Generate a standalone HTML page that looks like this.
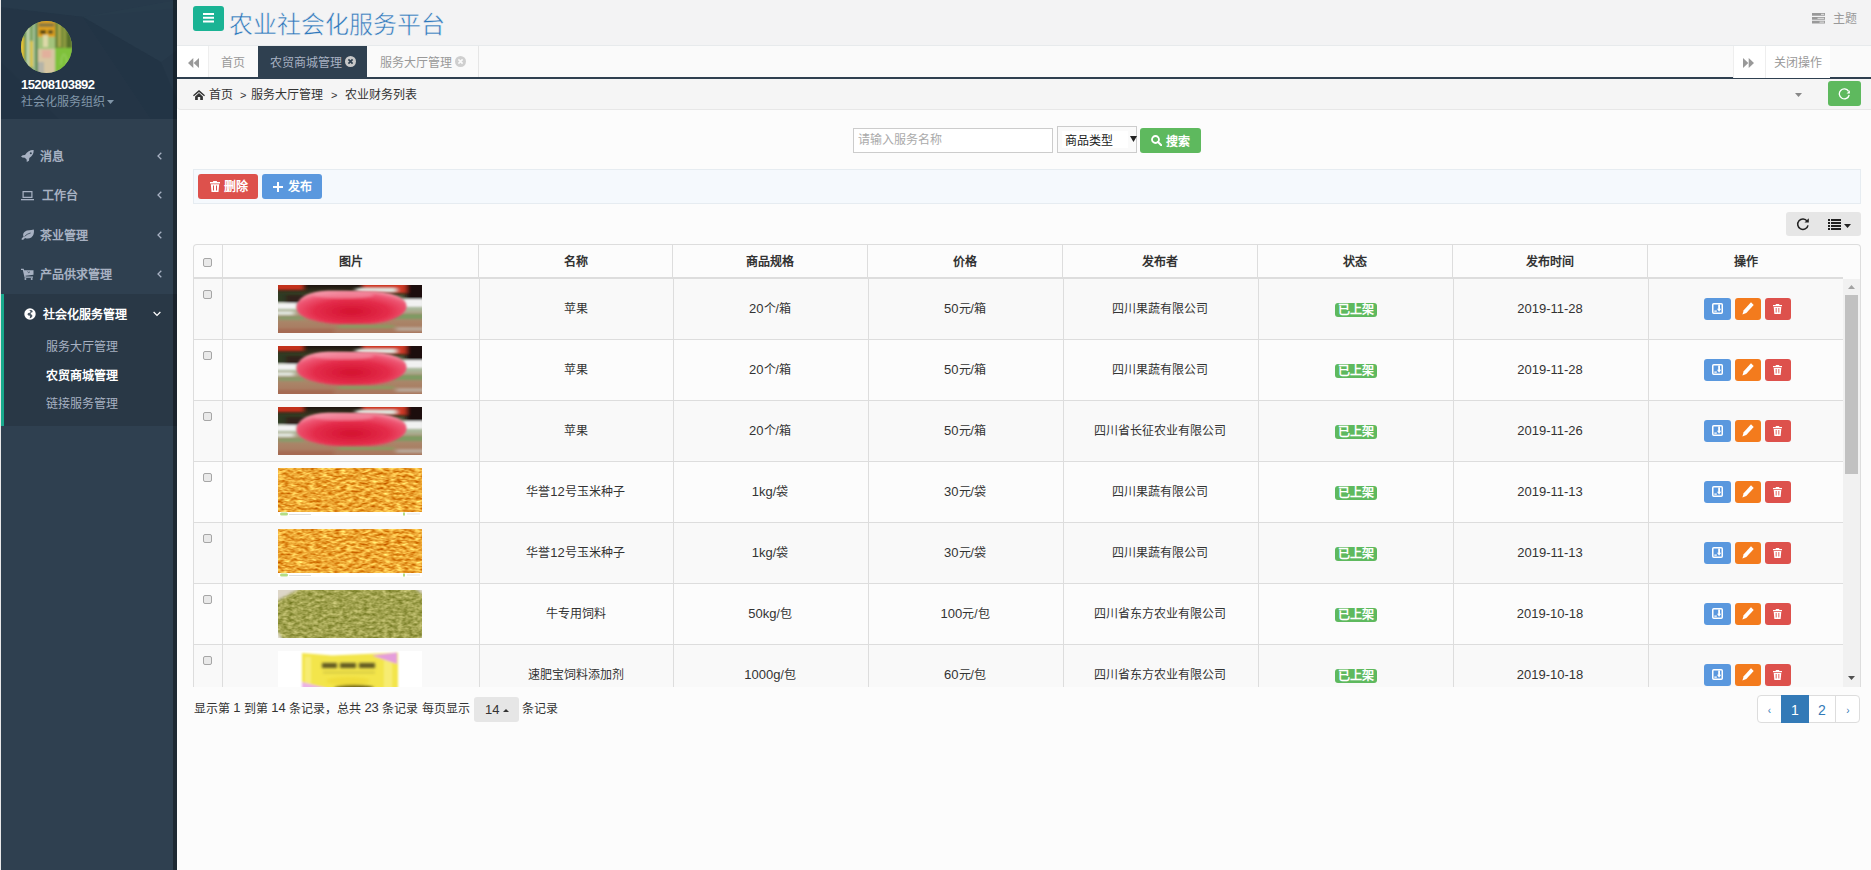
<!DOCTYPE html>
<html lang="zh-CN">
<head>
<meta charset="utf-8">
<title>农业社会化服务平台</title>
<style>
*{box-sizing:border-box;margin:0;padding:0}
html,body{width:1871px;height:870px;overflow:hidden;background:#fcfcfc}
body{font-family:"Liberation Sans",sans-serif;font-size:12px;color:#333;position:relative;line-height:1}
.abs{position:absolute}
svg{display:block}
i.n{font-style:normal;font-size:13px;position:relative;top:-1px}

/* ---------- sidebar ---------- */
#edge{left:0;top:0;width:1px;height:870px;background:#e9e9e9}
#side{left:1px;top:0;width:176px;height:870px;background:#2f4050;overflow:hidden}
#strip{left:173px;top:0;width:4px;height:870px;background:rgba(0,0,0,.36)}
#shead{left:0;top:0;width:176px;height:119px;background:#253748;overflow:hidden}
#avatar{left:20px;top:21px;width:51px;height:52px;border-radius:50%;overflow:hidden}
#uname{left:20px;top:78px;font-size:13px;font-weight:bold;color:#fff;letter-spacing:-.55px;line-height:14px;white-space:nowrap}
#urole{left:20px;top:95px;font-size:12px;color:#8095a8;line-height:14px;white-space:nowrap}
.mi{left:0;width:172px;height:39px;color:#a7b1c2;font-weight:bold;font-size:12px;white-space:nowrap}
.mi .ic{position:absolute;left:20px;top:14px}
.mi .tx{position:absolute;top:14px;line-height:14px}
.mi .ar{position:absolute;left:156px;top:16px}
#act{left:0;top:294px;width:176px;height:132px;background:#293846;border-left:3px solid #19aa8d}
.sub{left:44.5px;font-size:12px;line-height:14px;color:#a7b1c2;white-space:nowrap}

/* ---------- top ---------- */
#top{left:177px;top:0;width:1694px;height:46px;background:#f3f3f4;border-bottom:1px solid #e7eaec}
#burger{left:16px;top:6px;width:31px;height:25px;background:#1ab394;border-radius:3px}
#title{left:52px;top:10.500px;font-size:24px;line-height:28px;color:#2f78bc;font-weight:300;-webkit-text-stroke:.5px #f3f3f4;white-space:nowrap}
#theme{left:1656px;top:12px;font-size:12px;line-height:14px;color:#999;white-space:nowrap}

#tabs{left:177px;top:46px;width:1694px;height:33px;background:#fafafa;border-bottom:2px solid #2f4050}
.tab{top:0;height:31px;font-size:12px;line-height:14px;color:#999;white-space:nowrap}
.tab .t{position:absolute;top:10px}

#crumb{left:177px;top:79px;width:1694px;height:31px;background:#f5f5f5;border-bottom:1px solid #e7e7e7;border-radius:0 0 0 4px}
#crumb .c{position:absolute;top:9px;line-height:14px;white-space:nowrap;color:#333}
#rbtn{left:1651px;top:2px;width:33px;height:25px;background:#5eb95e;border-radius:3px}

/* ---------- search ---------- */
#sinput{left:853px;top:128px;width:200px;height:25px;background:#fff;border:1px solid #ccc;color:#aaa;line-height:23px;padding-left:4px;white-space:nowrap}
#ssel{left:1057px;top:126px;width:80px;height:27px;background:#fafafa;border:1px solid #ccc}
#ssel .in{position:absolute;left:4px;top:4px;width:66px;height:17px;background:#fff;line-height:20px;padding-left:3px;color:#222;white-space:nowrap}
#sbtn{left:1140px;top:128px;width:61px;height:25px;background:#5eb95e;border-radius:3px;color:#fff;font-weight:bold}

/* ---------- toolbar ---------- */
#tbar{left:193px;top:169px;width:1668px;height:35px;background:#f5f9fd;border:1px solid #e6ecf1}
.btn{border-radius:3px;color:#fff;font-weight:bold;white-space:nowrap}
#tools{left:1786px;top:212px;width:75px;height:24px;background:#e6e6e6;border-radius:3px}

/* ---------- table ---------- */
#tbl{left:193px;top:244px;width:1668px;height:443px;border:1px solid #ddd;border-bottom:0;border-radius:4px 4px 0 0;overflow:hidden}
#thead{left:0;top:0;width:1666px;height:32px;font-weight:bold}
#thead .h{position:absolute;top:0;height:32px;line-height:35px;text-align:center;border-left:1px solid #ddd;white-space:nowrap}
#hline{left:0;top:32px;width:1649px;height:2px;background:#ddd}
#tbody{left:0;top:34px;width:1649px;height:408px;overflow:hidden}
.row{left:0;width:1649px;height:61px;border-bottom:1px solid #ddd}
.row.s{background:#f9f9f9}
.row .d{position:absolute;top:0;height:60px;border-left:1px solid #ddd;display:flex;align-items:center;justify-content:center;white-space:nowrap;padding-right:2px}
.cb{position:absolute;width:9px;height:9px;border:1px solid #a6a6a6;border-radius:2px;background:#e9e9e9}
.pic{width:144px;height:48px;overflow:hidden;position:relative;left:0}
.badge{display:block;margin-left:2px;width:42px;height:14px;background:#5eb95e;border-radius:3px;color:#fff;font-weight:bold;font-size:12px;line-height:14px;text-align:center;margin-top:2px}
.ab{display:block;height:22px;border-radius:3px;position:relative;margin-right:4px;left:2px}
#sbar{left:1649px;top:34px;width:17px;height:409px;background:#f1f1f1}

/* ---------- footer ---------- */
#info{left:194px;top:701px;line-height:16px;white-space:nowrap}
#psize{left:474px;top:697px;width:45px;height:25px;background:#e6e6e6;border-radius:3px}
#pager{left:1757px;top:695px;width:103px;height:28px;border:1px solid #ddd;border-radius:4px;background:#fff;color:#337ab7;font-size:14px}
#pager div{position:absolute;top:-1px;height:28px;line-height:30px;text-align:center}
</style>
</head>
<body>
<div id="edge" class="abs"></div>
<div id="side" class="abs">
  <div id="shead" class="abs">
    <svg class="abs" style="left:0;top:0" width="176" height="119" viewBox="0 0 176 119">
      <polygon points="0,0 176,0 176,8 82,17 0,7" fill="#2a3d4e" opacity=".5"/>
      <polygon points="82,17 176,0 176,50 160,62" fill="#2a3e4f" opacity=".55"/>
      <polygon points="82,17 160,62 176,100 176,119 150,119" fill="#213343" opacity=".55"/>
      <polygon points="0,8 82,17 150,119 0,119" fill="#223444" opacity=".35"/>
      <polygon points="0,62 58,119 0,119" fill="#203141" opacity=".4"/>
    </svg>
    <div id="avatar" class="abs">
      <svg width="51" height="52" viewBox="0 0 51 52">
        <defs><filter id="avb" x="-10%" y="-10%" width="120%" height="120%"><feGaussianBlur stdDeviation="1"/></filter></defs>
        <rect width="51" height="52" fill="#8aa860"/>
        <g filter="url(#avb)">
          <rect x="-2" y="-2" width="19" height="56" fill="#7fa463"/>
          <rect x="-1" y="16" width="4" height="30" fill="#e6c436"/>
          <rect x="3" y="4" width="2" height="44" fill="#5f8f4a"/>
          <rect x="5.500" y="6" width="3" height="42" fill="#c4d6b0"/>
          <rect x="9" y="20" width="3" height="26" fill="#dcc446"/>
          <rect x="12" y="0" width="2.500" height="54" fill="#a8c49a"/>
          <rect x="14" y="0" width="3.500" height="54" fill="#638f58"/>
          <rect x="17" y="-2" width="17" height="19" fill="#e0a21e"/>
          <rect x="18" y="2" width="15" height="4" fill="#8a7a40"/>
          <rect x="19" y="9" width="6" height="4" fill="#5a4a18"/>
          <rect x="27" y="9" width="5" height="4" fill="#6a5a20"/>
          <rect x="17" y="16" width="17" height="13" fill="#a4c47c"/>
          <rect x="22" y="14" width="5" height="12" fill="#dcd9a8"/>
          <rect x="17" y="28" width="17" height="26" fill="#d7c6a2"/>
          <rect x="21" y="29" width="9" height="8" fill="#e2b09c"/>
          <rect x="17" y="41" width="6" height="14" fill="#b4b4a8"/>
          <rect x="34" y="-2" width="19" height="30" fill="#6d8438"/>
          <rect x="37" y="2" width="3" height="24" fill="#a9a84a"/>
          <rect x="42" y="6" width="3" height="22" fill="#8c9a3e"/>
          <rect x="46" y="8" width="4" height="20" fill="#566f2c"/>
          <rect x="34" y="27" width="19" height="27" fill="#7fc13a"/>
          <path d="M40 44c0-7 2-11 3-11s3 4 3 11" fill="none" stroke="#a9d87a" stroke-width=".8"/>
        </g>
      </svg>
    </div>
    <div id="uname" class="abs">15208103892</div>
    <div id="urole" class="abs">社会化服务组织<svg style="display:inline-block;margin-left:2px;vertical-align:2px" width="7" height="4" viewBox="0 0 7 4"><path d="M0 0h7L3.5 4z" fill="#8095a8"/></svg></div>
  </div>
  
  <div class="mi abs" style="top:136px"><svg class="ic" width="13" height="12" viewBox="0 0 13 12"><path fill="#a7b1c2" d="M12.6.1c.3 3-1 5.600-4.300 8l-.3 2.600L5.800 12l-.200-2.400-1.800-1.800L1.400 7.600 0 6.400l1.700-1.200 2.300-.1C6.400 1.600 9.300-.1 12.600.1zM9.800 2.300a1 1 0 1 0 .01 2 1 1 0 0 0-.01-2z"/></svg><span class="tx" style="left:39px">消息</span><svg class="ar" width="5" height="8" viewBox="0 0 5 8"><path d="M4.3.7L1 4l3.3 3.3" fill="none" stroke="#a7b1c2" stroke-width="1.3"/></svg></div>
  <div class="mi abs" style="top:175px"><svg class="ic" width="13" height="12" viewBox="0 0 13 12"><path fill="none" stroke="#a7b1c2" stroke-width="1.200" d="M2.100 2.600h8.800v5.800H2.100z"/><rect x="0" y="10" width="13" height="1.300" fill="#a7b1c2"/></svg><span class="tx" style="left:41px">工作台</span><svg class="ar" width="5" height="8" viewBox="0 0 5 8"><path d="M4.3.7L1 4l3.3 3.3" fill="none" stroke="#a7b1c2" stroke-width="1.3"/></svg></div>
  <div class="mi abs" style="top:215px"><svg class="ic" width="13" height="12" viewBox="0 0 13 12"><path fill="#a7b1c2" d="M12.800.6c.6 3.400-.3 6.300-2.500 7.800-1.900 1.300-4.300 1.400-6.200.5-.8.600-1.500 1.300-2.100 2.200L.3 10.200c.7-1 1.400-1.700 2.300-2.400C1.700 6 2.100 3.700 4.100 2.400 6.300.9 9.500 1.400 12.800.6z"/><path d="M3.600 7.500C5.200 5.700 7.200 4.600 9.600 4" fill="none" stroke="#2f4050" stroke-width=".8"/></svg><span class="tx" style="left:39px">茶业管理</span><svg class="ar" width="5" height="8" viewBox="0 0 5 8"><path d="M4.3.7L1 4l3.3 3.3" fill="none" stroke="#a7b1c2" stroke-width="1.3"/></svg></div>
  <div class="mi abs" style="top:254px"><svg class="ic" width="13" height="12" viewBox="0 0 13 12"><path fill="#a7b1c2" d="M0 .8h2.700l.4 1.400h9.400v4.600L4.500 7.700l.2.800h7.300v1.200H3.600L1.800 2H0zM4.400 10a1 1 0 1 1 0 2 1 1 0 0 1 0-2zm6.300 0a1 1 0 1 1 0 2 1 1 0 0 1 0-2z"/><path d="M6.700 3.400l.8 1.300 1.500-.9" fill="none" stroke="#2f4050" stroke-width=".7"/></svg><span class="tx" style="left:39px">产品供求管理</span><svg class="ar" width="5" height="8" viewBox="0 0 5 8"><path d="M4.3.7L1 4l3.3 3.3" fill="none" stroke="#a7b1c2" stroke-width="1.3"/></svg></div>
  <div id="act" class="abs">
    <svg class="abs" style="left:20px;top:14px" width="12" height="12" viewBox="0 0 12 12"><circle cx="6" cy="6" r="5.700" fill="#fff"/><path fill="#293846" d="M4.200 2.300l1.600.3.900 1.300-1 .9-1.500.2-.8 1.200.9 1.200 1.300.1.500 1.500-.6 1.300 1.500-.3 1.400-1.700-.3-1.400L6.700 6l.2-1.200 1.500-.5.300-1.400-1.400-.8z" opacity=".85"/></svg>
    <div class="abs" style="left:38.500px;top:14px;line-height:14px;color:#fff;font-weight:bold;white-space:nowrap">社会化服务管理</div>
    <svg class="abs" style="left:149px;top:16.500px" width="8" height="6" viewBox="0 0 9 6"><path d="M.7.800L4.500 4.500 8.300.8" fill="none" stroke="#fff" stroke-width="1.400"/></svg>
    <div class="sub abs" style="left:41.500px;top:46px">服务大厅管理</div>
    <div class="sub abs" style="left:41.500px;top:75px;color:#fff;font-weight:bold">农贸商城管理</div>
    <div class="sub abs" style="left:41.500px;top:103px">链接服务管理</div>
  </div>
</div>
<div id="strip" class="abs"></div>

<div id="top" class="abs">
  <div id="burger" class="abs"><svg class="abs" style="left:10px;top:7px" width="11" height="10" viewBox="0 0 11 10"><path fill="#fff" d="M0 0h11v2H0zM0 3.700h11v2H0zM0 7.400h11v2H0z"/></svg></div>
  <div id="title" class="abs">农业社会化服务平台</div>
  <svg class="abs" style="left:1635px;top:13px" width="13" height="11" viewBox="0 0 13 11"><path fill="#999" d="M0 0h13v2.800H0zM0 3.900h13v2.800H0zM0 7.800h13v2.800H0z"/><path fill="#d8d8d8" d="M9 .8h3.200v1.200H9zM5.500 4.700h6.700v1.200H5.500zM7.500 8.600h4.700v1.200H7.500z"/></svg>
  <div id="theme" class="abs">主题</div>
</div>
<div id="tabs" class="abs">
  <div class="abs" style="left:0;top:0;width:32px;height:31px;background:#fff;border-right:1px solid #eee"><svg class="abs" style="left:11px;top:12px" width="11" height="10" viewBox="0 0 11 10"><path fill="#999" d="M5.300 0v10L0 5zM11 0v10L5.700 5z"/></svg></div>
  <div class="tab abs" style="left:32px;width:49px"><span class="t" style="left:12px">首页</span></div>
  <div class="tab abs" style="left:81px;width:109px;height:33px;background:#2f4050;color:#a7b1c2"><span class="t" style="left:12px">农贸商城管理</span>
    <svg class="abs" style="left:87px;top:10px" width="11" height="11" viewBox="0 0 11 11"><circle cx="5.500" cy="5.500" r="5.500" fill="#c9c9c9"/><path d="M3.400 3.400l4.200 4.200M7.600 3.400L3.400 7.600" stroke="#2f4050" stroke-width="1.700"/></svg></div>
  <div class="tab abs" style="left:190px;width:112px;border-right:1px solid #e6e6e6"><span class="t" style="left:13px">服务大厅管理</span>
    <svg class="abs" style="left:88px;top:10px" width="11" height="11" viewBox="0 0 11 11"><circle cx="5.500" cy="5.500" r="5.500" fill="#cfcfcf"/><path d="M3.400 3.400l4.200 4.200M7.600 3.400L3.400 7.600" stroke="#fafafa" stroke-width="1.600"/></svg></div>
  <div class="abs" style="left:1556px;top:0;width:32px;height:32px;background:#fff;border-left:1px solid #eee"><svg class="abs" style="left:9px;top:12px" width="11" height="10" viewBox="0 0 11 10"><path fill="#999" d="M0 0v10l5.300-5zM5.700 0v10L11 5z"/></svg></div>
  <div class="abs" style="left:1588px;top:0;width:65px;height:32px;background:#fff;border-left:1px solid #eee;color:#999;line-height:14px"><span class="abs" style="left:8px;top:10px;white-space:nowrap">关闭操作</span></div>
</div>
<div id="crumb" class="abs">
  <svg class="abs" style="left:16px;top:11px" width="12" height="10" viewBox="0 0 12 10"><path fill="#333" d="M6 0l6 5.200-.9 1L6 1.900.9 6.200 0 5.200zM6 3.100l3.900 3.300V10H7.200V7H4.800v3H2.100V6.400z"/></svg>
  <span class="c" style="left:32px">首页</span>
  <span class="c" style="left:63px;font-size:11px">&gt;</span>
  <span class="c" style="left:74px">服务大厅管理</span>
  <span class="c" style="left:154px;font-size:11px">&gt;</span>
  <span class="c" style="left:168px">农业财务列表</span>
  <svg class="abs" style="left:1618px;top:14px" width="7" height="4" viewBox="0 0 7 4"><path d="M0 0h7L3.500 4z" fill="#888"/></svg>
  <div id="rbtn" class="abs"><svg class="abs" style="left:10px;top:6px" width="13" height="13" viewBox="0 0 13 13"><path d="M10.600 4.300A5 5 0 1 0 11.200 8" fill="none" stroke="#fff" stroke-width="1.300"/><path d="M11.900 3.200v3.300H8.600z" fill="#fff"/></svg></div>
</div>


<div id="sinput" class="abs">请输入服务名称</div>
<div id="ssel" class="abs"><div class="in">商品类型</div><svg class="abs" style="left:72px;top:9px" width="7" height="6" viewBox="0 0 7 6"><path d="M0 0h7L3.500 6z" fill="#222"/></svg></div>
<div id="sbtn" class="abs"><svg class="abs" style="left:11px;top:7px" width="11" height="11" viewBox="0 0 11 11"><circle cx="4.500" cy="4.500" r="3.500" fill="none" stroke="#fff" stroke-width="1.800"/><path d="M7 7l3.300 3.300" stroke="#fff" stroke-width="2" stroke-linecap="round"/></svg><span class="abs" style="left:26px;top:7px;line-height:14px;white-space:nowrap">搜索</span></div>


<div id="tbar" class="abs">
  <div class="btn abs" style="left:4px;top:4px;width:60px;height:25px;background:#dd514c"><svg class="abs" style="left:12px;top:7px" width="10" height="11" viewBox="0 0 10 11"><path fill="#fff" d="M3.300 0h3.400l.5 1H10v1.500H0V1h2.800zM.8 3.300h8.400L8.500 11h-7zM3 4.500v5h1v-5zm3 0v5h1v-5z"/></svg><span class="abs" style="left:25.500px;top:6px;line-height:14px">删除</span></div>
  <div class="btn abs" style="left:68px;top:4px;width:60px;height:25px;background:#5a98de"><svg class="abs" style="left:11px;top:8px" width="10" height="10" viewBox="0 0 10 10"><path fill="#fff" d="M4 0h2v4h4v2H6v4H4V6H0V4h4z"/></svg><span class="abs" style="left:26px;top:6px;line-height:14px">发布</span></div>
</div>
<div id="tools" class="abs">
  <svg class="abs" style="left:10px;top:5px" width="14" height="14" viewBox="0 0 14 14"><path d="M11.200 4.300A5.200 5.200 0 1 0 12 8.300" fill="none" stroke="#222" stroke-width="1.500"/><path d="M12.800 1.200v4.300H8.500z" fill="#222"/></svg>
  <svg class="abs" style="left:42px;top:7px" width="13" height="11" viewBox="0 0 13 11"><path fill="#222" d="M0 0h2v2H0zM3 0h10v2H3zM0 3h2v2H0zM3 3h10v2H3zM0 6h2v2H0zM3 6h10v2H3zM0 9h2v2H0zM3 9h10v2H3z"/></svg>
  <svg class="abs" style="left:58px;top:12px" width="7" height="4" viewBox="0 0 7 4"><path d="M0 0h7L3.500 4z" fill="#222"/></svg>
</div>


<svg width="0" height="0" style="position:absolute"><defs>
<filter id="f-b1" x="-10%" y="-20%" width="120%" height="140%"><feGaussianBlur stdDeviation="1.400"/></filter>
<filter id="f-b2" x="-10%" y="-20%" width="120%" height="140%"><feGaussianBlur stdDeviation="2.500 1.200"/></filter>
<filter id="f-b3" x="-5%" y="-10%" width="110%" height="120%"><feGaussianBlur stdDeviation=".8"/></filter>
<filter id="f-corn" x="0" y="0" width="100%" height="100%" color-interpolation-filters="sRGB">
  <feTurbulence type="fractalNoise" baseFrequency=".16 .4" numOctaves="2" seed="7"/>
  <feColorMatrix type="matrix" values=".45 0 0 0 .7  .9 0 0 0 .2  .8 0 0 0 -.2  0 0 0 0 1"/>
</filter>
<filter id="f-fod" x="0" y="0" width="100%" height="100%" color-interpolation-filters="sRGB">
  <feTurbulence type="fractalNoise" baseFrequency=".2 .34" numOctaves="2" seed="11"/>
  <feColorMatrix type="matrix" values=".5 0 0 0 .38  .45 0 0 0 .41  .5 0 0 0 .06  0 0 0 0 1"/>
</filter>
<radialGradient id="g-apple" cx=".5" cy=".62" r=".62"><stop offset="0" stop-color="#d4112f"/><stop offset=".55" stop-color="#e42d4b"/><stop offset=".85" stop-color="#ee5875"/><stop offset="1" stop-color="#f38ea0"/></radialGradient>
<linearGradient id="g-abg" x1="0" y1="0" x2="0" y2="1"><stop offset="0" stop-color="#1d1410"/><stop offset=".18" stop-color="#3a3a22"/><stop offset=".36" stop-color="#9aa78a"/><stop offset=".5" stop-color="#a9b79a"/><stop offset=".68" stop-color="#a98a6c"/><stop offset="1" stop-color="#a9765d"/></linearGradient>
<clipPath id="c-im"><rect width="144" height="48"/></clipPath>

<g id="im-apple" clip-path="url(#c-im)">
  <rect width="144" height="48" fill="url(#g-abg)"/>
  <g filter="url(#f-b2)">
    <rect x="-4" y="-3" width="30" height="8" fill="#c3301f"/>
    <rect x="84" y="-3" width="48" height="11" fill="#cf3a28"/>
    <rect x="128" y="-3" width="20" height="17" fill="#1a0f0c"/>
    <rect x="-4" y="8" width="30" height="9" fill="#2e3a22"/>
    <rect x="8" y="10" width="22" height="10" fill="#30201c"/>
    <rect x="-4" y="18" width="24" height="6" fill="#f3f3f3"/>
    <rect x="-4" y="26" width="20" height="4" fill="#dfe4dc"/>
    <rect x="78" y="3" width="40" height="4" fill="#dfe4dc"/>
    <rect x="124" y="14" width="24" height="8" fill="#f1f1f1"/>
    <rect x="112" y="29" width="36" height="5" fill="#7f9a63"/>
    <rect x="0" y="31" width="26" height="4" fill="#8a9a6b"/>
    <rect x="60" y="40" width="56" height="3" fill="#8b9a60"/>
    <rect x="-4" y="44" width="60" height="6" fill="#a56a52"/>
    <rect x="118" y="42" width="30" height="4" fill="#b7a595"/>
  </g>
  <path filter="url(#f-b3)" fill="url(#g-apple)" d="M18.500 23C18.500 13 30 6.500 50 5.800L98 6.200C118 8 128.500 14 128.500 21.500 128.500 30 113 37.500 92 38.800L60 39C38 38 18.500 32 18.500 23z"/>
  <ellipse cx="66" cy="10" rx="30" ry="3.500" fill="#f6a5b6" opacity=".55" filter="url(#f-b1)"/>
</g>

<g id="im-corn" clip-path="url(#c-im)">
  <rect width="144" height="48" fill="#e9a21a"/>
  <rect width="144" height="44" filter="url(#f-corn)"/>
  <rect y="44" width="144" height="4" fill="#fff"/>
  <rect x="2" y="44.500" width="8" height="3" rx="1.500" fill="#b4dc84"/>
  <rect x="11" y="46" width="22" height="1" fill="#ddd"/>
  <rect x="125" y="44.500" width="2" height="3" fill="#b4dc84"/>
  <rect x="129" y="45.500" width="13" height="1" fill="#e6e6e6"/>
</g>

<g id="im-fodder" clip-path="url(#c-im)">
  <rect width="144" height="48" fill="#a4a83e"/>
  <rect width="144" height="48" filter="url(#f-fod)"/>
  <g filter="url(#f-b1)">
    <path d="M-3-3h28L-3 12z" fill="#ddd6c8"/>
    <path d="M147-3h-12l12 9z" fill="#ddd8cc"/>
    <path d="M-3 51V38l9 13z" fill="#e4e0d6"/>
    <path d="M147 51V44l-6 7z" fill="#e4e0d6"/>
  </g>
</g>

<g id="im-bag" clip-path="url(#c-im)">
  <rect width="144" height="48" fill="#fff"/>
  <g filter="url(#f-b3)">
    <path d="M24 2l30 2.500 66-3v47H24z" fill="#f3e54b"/>
    <path d="M27 6h6v42h-6zM106 8h8v40h-8z" fill="#f8ee7c" opacity=".8"/>
    <path d="M94 4.500l25-3V13z" fill="#e59ddb"/>
    <path d="M24 31l24 6v11H24z" fill="#ecb2e5"/>
  </g>
  <g filter="url(#f-b1)">
    <rect x="44" y="12" width="15" height="5" fill="#5d5720"/>
    <rect x="62" y="12" width="16" height="5" fill="#5d5720"/>
    <rect x="81" y="12" width="16" height="5" fill="#5d5720"/>
    <rect x="45" y="21" width="52" height="1" fill="#b9ad3a"/>
    <ellipse cx="76" cy="37" rx="20" ry="3" fill="#5e5418"/>
    <ellipse cx="70" cy="30" rx="22" ry="4" fill="#efdc3a"/>
  </g>
</g>
</defs></svg>
<div id="tbl" class="abs">
  <div id="thead" class="abs"><div class="abs" style="left:9px;top:13px;width:9px;height:9px;border:1px solid #a6a6a6;border-radius:2px;background:#e9e9e9"></div><div class="h" style="left:28px;width:256px">图片</div><div class="h" style="left:284px;width:194px">名称</div><div class="h" style="left:478px;width:195px">商品规格</div><div class="h" style="left:673px;width:195px">价格</div><div class="h" style="left:868px;width:195px">发布者</div><div class="h" style="left:1063px;width:195px">状态</div><div class="h" style="left:1258px;width:195px">发布时间</div><div class="h" style="left:1453px;width:197px">操作</div></div>
  <div id="hline" class="abs"></div>
  <div id="tbody" class="abs">
<div class="row abs s" style="top:0px"><div class="cb" style="left:9px;top:11px"></div><div class="d" style="left:28px;width:257px"><div class="pic"><svg width="144" height="48"><use href="#im-apple"/></svg></div></div><div class="d" style="left:285px;width:194px">苹果</div><div class="d" style="left:479px;width:195px"><i class=n>20</i>个/箱</div><div class="d" style="left:674px;width:195px"><i class=n>50</i>元/箱</div><div class="d" style="left:869px;width:195px">四川果蔬有限公司</div><div class="d" style="left:1064px;width:195px"><span class="badge">已上架</span></div><div class="d" style="left:1259px;width:195px"><i class=n>2019-11-28</i></div><div class="d" style="left:1454px;width:195px"><span class="ab" style="width:27px;background:#5a98de"><svg class="abs" style="left:8px;top:5px" width="11" height="11" viewBox="0 0 11 11"><rect x=".75" y=".75" width="9.500" height="9.500" rx="1" fill="none" stroke="#fff" stroke-width="1.500"/><path fill="#fff" d="M6.200 1.500h1.800v4.300h1.200L7.100 8.800 5 5.800h1.200zM2.300 7.400h2.500v1.400H2.300z"/></svg></span><span class="ab" style="width:26px;background:#f37b1d"><svg class="abs" style="left:7px;top:4px" width="12" height="13" viewBox="0 0 12 13"><path fill="#fff" d="M9 .3l2.700 2.700-7.400 7.900-3.900 1.500 1.300-4.100z"/></svg></span><span class="ab" style="width:26px;background:#dd514c;margin-right:0"><svg class="abs" style="left:8.500px;top:5.500px" width="9" height="10" viewBox="0 0 10 11"><path fill="#fff" d="M3.300 0h3.400l.5 1H10v1.500H0V1h2.800zM.8 3.300h8.400L8.500 11h-7zM3 4.500v5h1v-5zm3 0v5h1v-5z"/></svg></span></div></div>
<div class="row abs" style="top:61px"><div class="cb" style="left:9px;top:11px"></div><div class="d" style="left:28px;width:257px"><div class="pic"><svg width="144" height="48"><use href="#im-apple"/></svg></div></div><div class="d" style="left:285px;width:194px">苹果</div><div class="d" style="left:479px;width:195px"><i class=n>20</i>个/箱</div><div class="d" style="left:674px;width:195px"><i class=n>50</i>元/箱</div><div class="d" style="left:869px;width:195px">四川果蔬有限公司</div><div class="d" style="left:1064px;width:195px"><span class="badge">已上架</span></div><div class="d" style="left:1259px;width:195px"><i class=n>2019-11-28</i></div><div class="d" style="left:1454px;width:195px"><span class="ab" style="width:27px;background:#5a98de"><svg class="abs" style="left:8px;top:5px" width="11" height="11" viewBox="0 0 11 11"><rect x=".75" y=".75" width="9.500" height="9.500" rx="1" fill="none" stroke="#fff" stroke-width="1.500"/><path fill="#fff" d="M6.200 1.500h1.800v4.300h1.200L7.100 8.800 5 5.800h1.200zM2.300 7.400h2.500v1.400H2.300z"/></svg></span><span class="ab" style="width:26px;background:#f37b1d"><svg class="abs" style="left:7px;top:4px" width="12" height="13" viewBox="0 0 12 13"><path fill="#fff" d="M9 .3l2.700 2.700-7.400 7.900-3.900 1.500 1.300-4.100z"/></svg></span><span class="ab" style="width:26px;background:#dd514c;margin-right:0"><svg class="abs" style="left:8.500px;top:5.500px" width="9" height="10" viewBox="0 0 10 11"><path fill="#fff" d="M3.300 0h3.400l.5 1H10v1.500H0V1h2.800zM.8 3.300h8.400L8.500 11h-7zM3 4.500v5h1v-5zm3 0v5h1v-5z"/></svg></span></div></div>
<div class="row abs s" style="top:122px"><div class="cb" style="left:9px;top:11px"></div><div class="d" style="left:28px;width:257px"><div class="pic"><svg width="144" height="48"><use href="#im-apple"/></svg></div></div><div class="d" style="left:285px;width:194px">苹果</div><div class="d" style="left:479px;width:195px"><i class=n>20</i>个/箱</div><div class="d" style="left:674px;width:195px"><i class=n>50</i>元/箱</div><div class="d" style="left:869px;width:195px">四川省长征农业有限公司</div><div class="d" style="left:1064px;width:195px"><span class="badge">已上架</span></div><div class="d" style="left:1259px;width:195px"><i class=n>2019-11-26</i></div><div class="d" style="left:1454px;width:195px"><span class="ab" style="width:27px;background:#5a98de"><svg class="abs" style="left:8px;top:5px" width="11" height="11" viewBox="0 0 11 11"><rect x=".75" y=".75" width="9.500" height="9.500" rx="1" fill="none" stroke="#fff" stroke-width="1.500"/><path fill="#fff" d="M6.200 1.500h1.800v4.300h1.200L7.100 8.800 5 5.800h1.200zM2.300 7.400h2.500v1.400H2.300z"/></svg></span><span class="ab" style="width:26px;background:#f37b1d"><svg class="abs" style="left:7px;top:4px" width="12" height="13" viewBox="0 0 12 13"><path fill="#fff" d="M9 .3l2.700 2.700-7.400 7.900-3.900 1.500 1.300-4.100z"/></svg></span><span class="ab" style="width:26px;background:#dd514c;margin-right:0"><svg class="abs" style="left:8.500px;top:5.500px" width="9" height="10" viewBox="0 0 10 11"><path fill="#fff" d="M3.300 0h3.400l.5 1H10v1.500H0V1h2.800zM.8 3.300h8.400L8.500 11h-7zM3 4.500v5h1v-5zm3 0v5h1v-5z"/></svg></span></div></div>
<div class="row abs" style="top:183px"><div class="cb" style="left:9px;top:11px"></div><div class="d" style="left:28px;width:257px"><div class="pic"><svg width="144" height="48"><use href="#im-corn"/></svg></div></div><div class="d" style="left:285px;width:194px">华誉<i class=n>12</i>号玉米种子</div><div class="d" style="left:479px;width:195px"><i class=n>1kg</i>/袋</div><div class="d" style="left:674px;width:195px"><i class=n>30</i>元/袋</div><div class="d" style="left:869px;width:195px">四川果蔬有限公司</div><div class="d" style="left:1064px;width:195px"><span class="badge">已上架</span></div><div class="d" style="left:1259px;width:195px"><i class=n>2019-11-13</i></div><div class="d" style="left:1454px;width:195px"><span class="ab" style="width:27px;background:#5a98de"><svg class="abs" style="left:8px;top:5px" width="11" height="11" viewBox="0 0 11 11"><rect x=".75" y=".75" width="9.500" height="9.500" rx="1" fill="none" stroke="#fff" stroke-width="1.500"/><path fill="#fff" d="M6.200 1.500h1.800v4.300h1.200L7.100 8.800 5 5.800h1.200zM2.300 7.400h2.500v1.400H2.300z"/></svg></span><span class="ab" style="width:26px;background:#f37b1d"><svg class="abs" style="left:7px;top:4px" width="12" height="13" viewBox="0 0 12 13"><path fill="#fff" d="M9 .3l2.700 2.700-7.400 7.900-3.900 1.500 1.300-4.100z"/></svg></span><span class="ab" style="width:26px;background:#dd514c;margin-right:0"><svg class="abs" style="left:8.500px;top:5.500px" width="9" height="10" viewBox="0 0 10 11"><path fill="#fff" d="M3.300 0h3.400l.5 1H10v1.500H0V1h2.800zM.8 3.300h8.400L8.500 11h-7zM3 4.500v5h1v-5zm3 0v5h1v-5z"/></svg></span></div></div>
<div class="row abs s" style="top:244px"><div class="cb" style="left:9px;top:11px"></div><div class="d" style="left:28px;width:257px"><div class="pic"><svg width="144" height="48"><use href="#im-corn"/></svg></div></div><div class="d" style="left:285px;width:194px">华誉<i class=n>12</i>号玉米种子</div><div class="d" style="left:479px;width:195px"><i class=n>1kg</i>/袋</div><div class="d" style="left:674px;width:195px"><i class=n>30</i>元/袋</div><div class="d" style="left:869px;width:195px">四川果蔬有限公司</div><div class="d" style="left:1064px;width:195px"><span class="badge">已上架</span></div><div class="d" style="left:1259px;width:195px"><i class=n>2019-11-13</i></div><div class="d" style="left:1454px;width:195px"><span class="ab" style="width:27px;background:#5a98de"><svg class="abs" style="left:8px;top:5px" width="11" height="11" viewBox="0 0 11 11"><rect x=".75" y=".75" width="9.500" height="9.500" rx="1" fill="none" stroke="#fff" stroke-width="1.500"/><path fill="#fff" d="M6.200 1.500h1.800v4.300h1.200L7.100 8.800 5 5.800h1.200zM2.300 7.400h2.500v1.400H2.300z"/></svg></span><span class="ab" style="width:26px;background:#f37b1d"><svg class="abs" style="left:7px;top:4px" width="12" height="13" viewBox="0 0 12 13"><path fill="#fff" d="M9 .3l2.700 2.700-7.400 7.900-3.900 1.500 1.300-4.100z"/></svg></span><span class="ab" style="width:26px;background:#dd514c;margin-right:0"><svg class="abs" style="left:8.500px;top:5.500px" width="9" height="10" viewBox="0 0 10 11"><path fill="#fff" d="M3.300 0h3.400l.5 1H10v1.500H0V1h2.800zM.8 3.300h8.400L8.500 11h-7zM3 4.500v5h1v-5zm3 0v5h1v-5z"/></svg></span></div></div>
<div class="row abs" style="top:305px"><div class="cb" style="left:9px;top:11px"></div><div class="d" style="left:28px;width:257px"><div class="pic"><svg width="144" height="48"><use href="#im-fodder"/></svg></div></div><div class="d" style="left:285px;width:194px">牛专用饲料</div><div class="d" style="left:479px;width:195px"><i class=n>50kg</i>/包</div><div class="d" style="left:674px;width:195px"><i class=n>100</i>元/包</div><div class="d" style="left:869px;width:195px">四川省东方农业有限公司</div><div class="d" style="left:1064px;width:195px"><span class="badge">已上架</span></div><div class="d" style="left:1259px;width:195px"><i class=n>2019-10-18</i></div><div class="d" style="left:1454px;width:195px"><span class="ab" style="width:27px;background:#5a98de"><svg class="abs" style="left:8px;top:5px" width="11" height="11" viewBox="0 0 11 11"><rect x=".75" y=".75" width="9.500" height="9.500" rx="1" fill="none" stroke="#fff" stroke-width="1.500"/><path fill="#fff" d="M6.200 1.500h1.800v4.300h1.200L7.100 8.800 5 5.800h1.200zM2.300 7.400h2.500v1.400H2.300z"/></svg></span><span class="ab" style="width:26px;background:#f37b1d"><svg class="abs" style="left:7px;top:4px" width="12" height="13" viewBox="0 0 12 13"><path fill="#fff" d="M9 .3l2.700 2.700-7.400 7.900-3.900 1.500 1.300-4.100z"/></svg></span><span class="ab" style="width:26px;background:#dd514c;margin-right:0"><svg class="abs" style="left:8.500px;top:5.500px" width="9" height="10" viewBox="0 0 10 11"><path fill="#fff" d="M3.300 0h3.400l.5 1H10v1.500H0V1h2.800zM.8 3.300h8.400L8.500 11h-7zM3 4.500v5h1v-5zm3 0v5h1v-5z"/></svg></span></div></div>
<div class="row abs s" style="top:366px"><div class="cb" style="left:9px;top:11px"></div><div class="d" style="left:28px;width:257px"><div class="pic"><svg width="144" height="48"><use href="#im-bag"/></svg></div></div><div class="d" style="left:285px;width:194px">速肥宝饲料添加剂</div><div class="d" style="left:479px;width:195px"><i class=n>1000g</i>/包</div><div class="d" style="left:674px;width:195px"><i class=n>60</i>元/包</div><div class="d" style="left:869px;width:195px">四川省东方农业有限公司</div><div class="d" style="left:1064px;width:195px"><span class="badge">已上架</span></div><div class="d" style="left:1259px;width:195px"><i class=n>2019-10-18</i></div><div class="d" style="left:1454px;width:195px"><span class="ab" style="width:27px;background:#5a98de"><svg class="abs" style="left:8px;top:5px" width="11" height="11" viewBox="0 0 11 11"><rect x=".75" y=".75" width="9.500" height="9.500" rx="1" fill="none" stroke="#fff" stroke-width="1.500"/><path fill="#fff" d="M6.200 1.500h1.800v4.300h1.200L7.100 8.800 5 5.800h1.200zM2.300 7.400h2.500v1.400H2.300z"/></svg></span><span class="ab" style="width:26px;background:#f37b1d"><svg class="abs" style="left:7px;top:4px" width="12" height="13" viewBox="0 0 12 13"><path fill="#fff" d="M9 .3l2.700 2.700-7.400 7.900-3.900 1.500 1.300-4.100z"/></svg></span><span class="ab" style="width:26px;background:#dd514c;margin-right:0"><svg class="abs" style="left:8.500px;top:5.500px" width="9" height="10" viewBox="0 0 10 11"><path fill="#fff" d="M3.300 0h3.400l.5 1H10v1.500H0V1h2.800zM.8 3.300h8.400L8.500 11h-7zM3 4.500v5h1v-5zm3 0v5h1v-5z"/></svg></span></div></div>
  </div>
  <div id="sbar" class="abs">
    <svg class="abs" style="left:5px;top:6px" width="7" height="4" viewBox="0 0 7 4"><path d="M0 4h7L3.500 0z" fill="#a3a3a3"/></svg>
    <div class="abs" style="left:2px;top:16px;width:13px;height:179px;background:#c1c1c1"></div>
    <svg class="abs" style="left:5px;top:397px" width="7" height="4" viewBox="0 0 7 4"><path d="M0 0h7L3.500 4z" fill="#505050"/></svg>
  </div>
</div>


<div id="info" class="abs">显示第 <i class=n>1</i> 到第 <i class=n>14</i> 条记录，总共 <i class=n>23</i> 条记录 每页显示</div>
<div id="psize" class="abs"><span class="abs" style="left:11px;top:6px;font-size:13px;line-height:14px">14</span><svg class="abs" style="left:29px;top:12px" width="6" height="3" viewBox="0 0 6 3"><path d="M0 3h6L3 0z" fill="#333"/></svg></div>
<div class="abs" style="left:522px;top:701px;line-height:16px;white-space:nowrap">条记录</div>
<div id="pager" class="abs">
  <div style="left:0;width:23px;font-size:10px;line-height:32px">&#8249;</div>
  <div style="left:23px;width:28px;background:#337ab7;color:#fff">1</div>
  <div style="left:51px;width:26px">2</div>
  <div style="left:77px;width:25px;top:0;height:26px;border-left:1px solid #ddd;font-size:10px;line-height:30px">&#8250;</div>
</div>

</body>
</html>
